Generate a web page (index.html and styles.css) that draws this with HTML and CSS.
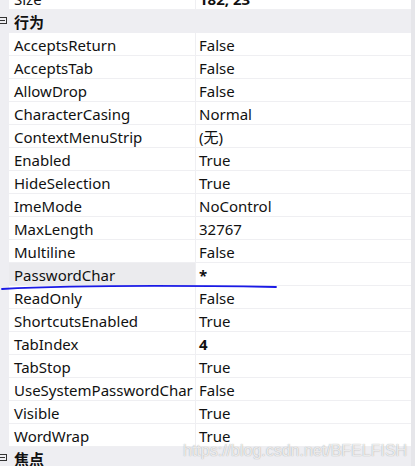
FILE: index.html
```html
<!DOCTYPE html>
<html>
<head>
<meta charset="utf-8">
<link rel="stylesheet" href="styles.css">
</head>
<body>
<div class="grid">
  <div class="list">
    <div class="row"><div class="gutter"></div><div class="name">Size</div><div class="val bold">182, 23</div></div>
    <div class="cat"><div class="gutter"><span class="tog"></span></div><div class="catname">行为</div></div>
    <div class="row"><div class="gutter"></div><div class="name">AcceptsReturn</div><div class="val">False</div></div>
    <div class="row"><div class="gutter"></div><div class="name">AcceptsTab</div><div class="val">False</div></div>
    <div class="row"><div class="gutter"></div><div class="name">AllowDrop</div><div class="val">False</div></div>
    <div class="row"><div class="gutter"></div><div class="name">CharacterCasing</div><div class="val">Normal</div></div>
    <div class="row"><div class="gutter"></div><div class="name">ContextMenuStrip</div><div class="val">(无)</div></div>
    <div class="row"><div class="gutter"></div><div class="name">Enabled</div><div class="val">True</div></div>
    <div class="row"><div class="gutter"></div><div class="name">HideSelection</div><div class="val">True</div></div>
    <div class="row"><div class="gutter"></div><div class="name">ImeMode</div><div class="val">NoControl</div></div>
    <div class="row"><div class="gutter"></div><div class="name">MaxLength</div><div class="val">32767</div></div>
    <div class="row"><div class="gutter"></div><div class="name">Multiline</div><div class="val">False</div></div>
    <div class="row sel"><div class="gutter"></div><div class="name">PasswordChar</div><div class="val bold">*</div></div>
    <div class="row"><div class="gutter"></div><div class="name">ReadOnly</div><div class="val">False</div></div>
    <div class="row"><div class="gutter"></div><div class="name">ShortcutsEnabled</div><div class="val">True</div></div>
    <div class="row"><div class="gutter"></div><div class="name">TabIndex</div><div class="val bold">4</div></div>
    <div class="row"><div class="gutter"></div><div class="name">TabStop</div><div class="val">True</div></div>
    <div class="row"><div class="gutter"></div><div class="name">UseSystemPasswordChar</div><div class="val">False</div></div>
    <div class="row"><div class="gutter"></div><div class="name">Visible</div><div class="val">True</div></div>
    <div class="row"><div class="gutter"></div><div class="name">WordWrap</div><div class="val">True</div></div>
    <div class="cat"><div class="gutter"><span class="tog"></span></div><div class="catname">焦点</div></div>
  </div>
  <div class="scroll"></div>
</div>
<svg class="mark" width="415" height="466" viewBox="0 0 415 466">
  <path d="M2 289 C 60 286, 150 285, 276 287" fill="none" stroke="#1a1ae6" stroke-width="1.8" stroke-linecap="round"/>
</svg>
<div class="wm">https://blog.csdn.net/BFELFISH</div>
</body>
</html>
```

FILE: styles.css
```css
html, body {
  margin: 0;
  padding: 0;
  background: #eeeef2;
}
body {
  width: 415px;
  height: 466px;
  overflow: hidden;
  position: relative;
  font-family: "Noto Sans", "Noto Sans CJK SC", sans-serif;
  font-size: 15px;
  color: #111;
}
.grid {
  display: flex;
  margin-top: -13px;
}
.list {
  width: 411px;
  display: flex;
  flex-direction: column;
}
.scroll {
  width: 4px;
  background: #e6e6ea;
}
.row {
  display: grid;
  grid-template-columns: 9px 187px 215px;
  height: 23px;
  box-sizing: border-box;
}
.row .name, .row .val {
  background: #fff;
  border-bottom: 1px solid #efeff2;
  box-sizing: border-box;
  display: flex;
  align-items: center;
  white-space: nowrap;
  overflow: hidden;
  line-height: 22px;
  padding-top: 1px;
}
.row .name {
  padding-left: 5px;
  border-right: 1px solid #efeff2;
}
.row .val {
  padding-left: 3px;
}
.row.sel .name {
  background: #ebebee;
}
.bold {
  font-weight: bold;
}
.gutter {
  background: #eeeef2;
  position: relative;
}
.cat {
  display: grid;
  grid-template-columns: 9px 1fr;
  height: 23px;
  background: #eeeef2;
}
.catname {
  padding-left: 5px;
  font-weight: bold;
  font-family: "Noto Sans CJK SC", sans-serif;
  line-height: 23px;
}
.tog {
  position: absolute;
  left: 0;
  top: 7px;
  width: 7px;
  height: 7px;
  border: 1px solid #333;
  border-left: none;
  box-sizing: border-box;
}
.tog::after {
  content: "";
  position: absolute;
  left: 0;
  top: 2px;
  width: 5px;
  height: 1px;
  background: #333;
}
.mark {
  position: absolute;
  left: 0;
  top: 0;
  pointer-events: none;
}
.wm {
  position: absolute;
  left: 183px;
  top: 441px;
  font-family: "Liberation Sans", sans-serif;
  font-size: 16px;
  line-height: 20px;
  color: rgba(255,255,255,0.8);
  text-shadow: 0 0 1px rgba(110,110,110,0.7);
}
```
